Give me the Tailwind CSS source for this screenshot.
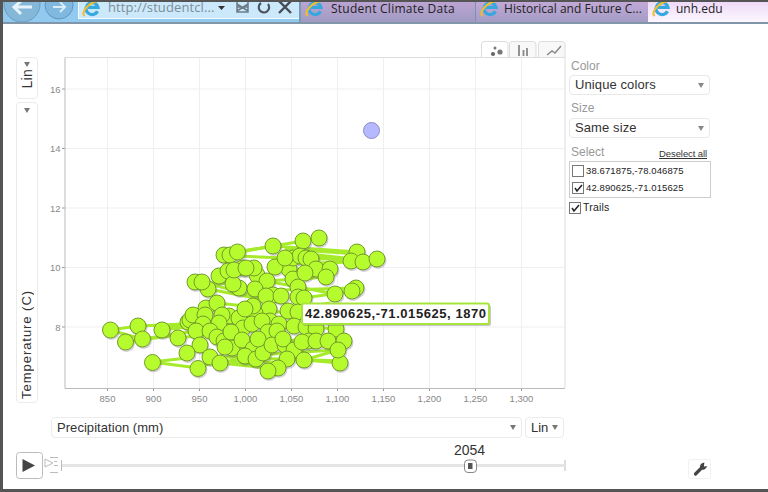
<!DOCTYPE html>
<html lang="en">
<head>
    <meta charset="UTF-8">
    <meta name="viewport" content="width=device-width, initial-scale=1.0">
    <title>Student Climate Data</title>
    <script src="https://cdn.jsdelivr.net/npm/@tailwindcss/browser@4"></script>
</head>
<body class="bg-white overflow-hidden font-['Liberation_Sans',Arial,sans-serif] text-[#333]">
    <svg class="hidden">
        <symbol id="ie" viewBox="0 0 20 18">
            <path d="M15.5 12.2A6 6 0 1 1 16 8.4H6" fill="none" stroke="#35a9df" stroke-width="3.2"/>
            <path d="M2.5 17C-1 14 5 3.500 18 1.500" fill="none" stroke="#f4bd2c" stroke-width="2.200"/>
        </symbol>
    </svg>
    <div class="flex flex-col w-[768px] h-[492px] border-l-[3px] border-t-2 border-b-[3px] border-[#555]">
        <!-- browser bar -->
        <header class="flex h-[22px] shrink-0 overflow-hidden border-b-2 border-[#8196a8] bg-[#91c9ef] font-['Open_Sans','Noto_Sans',sans-serif] text-[12px] font-medium text-[#222]">
            <svg class="w-[75px] h-5 shrink-0" viewBox="3 2 75 20">
                <circle cx="22" cy="4" r="18" fill="#85b7d9" stroke="#6b9cc2"/>
                <circle cx="59" cy="5" r="14" fill="#80b8df" stroke="#5f97c1"/>
                <path d="M32 7H14M21 1l-7 6 7 7" fill="none" stroke="#e6f3fb" stroke-width="3"/>
                <path d="M53 7h12M60 2l5 5-5 5" fill="none" stroke="#d9edf9" stroke-width="2"/>
            </svg>
            <div class="flex w-[221px] h-[17px] shrink-0 border-l border-b border-[#f3fbff] bg-[#cbe9fb]">
                <svg class="w-5 h-[18px] ml-[3px] -mt-[3px]"><use href="#ie"/></svg>
                <span class="w-[104px] ml-[6px] leading-[10px] text-[13px] font-normal tracking-[0.1px] text-[#7d8d98]">http://studentcl...</span>
                <svg class="w-[84px] h-[17px]" viewBox="212 2 84 17">
                    <path d="M218 6h7l-3.500 4z" fill="#333"/>
                    <path d="M237 1h11v11h-11zM237 4l11 7M248 4l-11 7M237 7h11" fill="none" stroke="#6c7c88" stroke-width="1.500"/>
                    <path d="M268 4a5.200 5.200 0 1 1-7 -1" fill="none" stroke="#4c565f" stroke-width="2.200"/>
                    <path d="M279 1l12 12M291 1l-12 12" stroke="#454d55" stroke-width="2.400"/>
                </svg>
            </div>
            <div class="flex w-[176px] shrink-0 border-l-2 border-[#719db7] bg-linear-to-b from-[#bca4d3] to-[#a09bc3]">
                <svg class="w-5 h-[18px] ml-[4px] -mt-[3px]"><use href="#ie"/></svg>
                <span class="ml-[6px] leading-[14px] tracking-[0.25px]">Student Climate Data</span>
            </div>
            <div class="flex w-[173px] shrink-0 border-l border-[#7c92ad] bg-linear-to-b from-[#c2a9d7] to-[#a39cc4]">
                <svg class="w-5 h-[18px] ml-[4px] -mt-[3px] shrink-0"><use href="#ie"/></svg>
                <span class="ml-[4px] leading-[14px] tracking-[0.03px] whitespace-nowrap">Historical and Future C...</span>
            </div>
            <div class="flex grow bg-linear-to-b from-[#eedaf8] to-[#fcf7fe]">
                <svg class="w-5 h-[18px] ml-[4px] -mt-[3px]"><use href="#ie"/></svg>
                <span class="ml-[4px] leading-[14px]">unh.edu</span>
            </div>
        </header>

        <main class="flex h-[384px] shrink-0">
            <!-- y axis selectors -->
            <div class="flex flex-col gap-[3px] w-[22px] ml-[13px] mt-[33px] mr-[5px]">
                <div class="flex flex-col items-center h-[42px] pt-[4px] gap-[2px] border border-[#ebebeb] rounded">
                    <svg class="w-[7px] h-[5px] shrink-0"><path d="M0 0h6L3 5z" fill="#777"/></svg>
                    <span class="[writing-mode:vertical-rl] rotate-180 text-[14px] leading-4 tracking-[0.3px] text-[#333]">Lin</span>
                </div>
                <div class="flex flex-col items-center justify-between h-[301px] pt-[5px] pb-[3px] border border-[#ebebeb] rounded">
                    <svg class="w-[7px] h-[5px]"><path d="M0 0h6L3 5z" fill="#777"/></svg>
                    <span class="[writing-mode:vertical-rl] rotate-180 text-[13px] leading-4 tracking-[0.95px] text-[#333]">Temperature (C)</span>
                </div>
            </div>

            <!-- chart -->
            <div class="w-[524px] shrink-0">
                <div class="flex justify-end h-[16px] mt-[17px] mr-[1px]">
                    <svg class="w-[85px] h-[17px] shrink-0" viewBox="481 41 85 17">
                        <path d="M481.500 58V44q0-2.500 2.500-2.500h21q3 0 3 3V58" fill="#fff" stroke="#ddd"/>
                        <path d="M509.500 57.500V44q0-2.500 2.500-2.500h21q3 0 3 3v13z" fill="#f8f8f8" stroke="#ddd"/>
                        <path d="M538.500 57.500V44q0-2.500 2.500-2.500h21q3 0 3 3v13z" fill="#f8f8f8" stroke="#ddd"/>
                        <circle cx="493" cy="54" r="2.100" fill="#666"/><circle cx="500" cy="52" r="2.600" fill="#777"/><circle cx="495" cy="48" r="1.500" fill="#777"/>
                        <path d="M519 45v11M523.500 50v6M527 48v8" stroke="#888" stroke-width="1.800"/>
                        <path d="M547 55l5-4 3 2 6-7" fill="none" stroke="#888" stroke-width="1.500"/>
                    </svg>
                </div>
                <svg id="chart" class="w-[524px] h-[350px]" viewBox="43 57 524 350"></svg>
            </div>

            <!-- options -->
            <div class="w-[142px] ml-[2px] pt-[35px] text-[13px]">
                <div class="h-[16px] pl-[2px] leading-[15px] text-[12px] text-[#999]">Color</div>
                <div class="flex items-center justify-between h-[20px] pl-[5px] pr-[5px] mr-[1px] border border-[#e8e8e8] rounded">
                    <span class="tracking-[0.1px]">Unique colors</span>
                    <svg class="w-[6px] h-[5px]"><path d="M0 0h6L3 5z" fill="#888"/></svg>
                </div>
                <div class="h-[23px] pt-[6px] pl-[2px] leading-[15px] text-[12px] text-[#999]">Size</div>
                <div class="flex items-center justify-between h-[20px] pl-[5px] pr-[5px] mr-[1px] border border-[#e8e8e8] rounded">
                    <span class="tracking-[0.1px]">Same size</span>
                    <svg class="w-[6px] h-[5px]"><path d="M0 0h6L3 5z" fill="#888"/></svg>
                </div>
                <div class="flex justify-between h-[23px] pt-[7px] pl-[2px] pr-[4px] leading-[15px] text-[12px] text-[#999]">
                    <span>Select</span>
                    <span class="text-[9.500px] leading-[18px] tracking-[-0.1px] text-[#333] underline">Deselect all</span>
                </div>
                <div class="flex flex-col justify-around h-[37px] pl-[2px] border border-[#ccc] text-[9.500px] text-[#222]">
                    <div class="flex items-center h-[16px]">
                        <svg class="w-[12px] h-[12px] mr-[2px]"><rect x=".5" y=".5" width="11" height="11" fill="#fff" stroke="#777"/></svg>
                        <span class="tracking-[0.1px]">38.671875,-78.046875</span>
                    </div>
                    <div class="flex items-center h-[16px]">
                        <svg class="w-[12px] h-[12px] mr-[2px]"><rect x=".5" y=".5" width="11" height="11" fill="#fff" stroke="#777"/><path d="M3 6l2 3 5-6" fill="none" stroke="#222" stroke-width="1.500"/></svg>
                        <span class="tracking-[0.1px]">42.890625,-71.015625</span>
                    </div>
                </div>
                <div class="flex items-center h-[19px] text-[10.500px] text-[#222]">
                    <svg class="w-[12px] h-[12px] mr-[2px]"><rect x=".5" y=".5" width="11" height="11" fill="#fff" stroke="#777"/><path d="M3 6l2 3 5-6" fill="none" stroke="#222" stroke-width="1.500"/></svg>
                    <span class="tracking-[0.2px]">Trails</span>
                </div>
            </div>
        </main>

        <!-- x axis selectors -->
        <div class="flex gap-[3px] h-[21px] shrink-0 ml-[48px] mt-[9px] mb-[2px] text-[13px]">
            <div class="flex items-center justify-between w-[471px] px-[5px] border border-[#ebebeb] rounded">
                <span class="tracking-[0.05px]">Precipitation (mm)</span>
                <svg class="w-[6px] h-[5px]"><path d="M0 0h6L3 5z" fill="#777"/></svg>
            </div>
            <div class="flex items-center justify-between w-[39px] px-[5px] border border-[#ebebeb] rounded">
                <span>Lin</span>
                <svg class="w-[6px] h-[5px]"><path d="M0 0h6L3 5z" fill="#777"/></svg>
            </div>
        </div>

        <!-- time slider -->
        <svg class="w-[765px] h-[49px] shrink-0" viewBox="3 440 765 49" font-family="Liberation Sans">
            <rect x="16.500" y="452.500" width="26" height="26" rx="3" fill="#fff" stroke="#bbb"/>
            <path d="M22.500 459v13l12.500-6.500z" fill="#444"/>
            <path d="M45 459v8l8-4zM50 457.500h8M54 461.500h3M54 465.500h4M50 472.500h8" fill="none" stroke="#bbb"/>
            <path d="M61.500 460v11M565 460v11" stroke="#bbb"/>
            <path d="M62 465.500h503" stroke="#e5e5e5" stroke-width="3"/>
            <text x="469.500" y="455" text-anchor="middle" font-size="14" fill="#333">2054</text>
            <rect x="464.500" y="460" width="12" height="12.500" rx="3.500" fill="#fff" stroke="#888"/>
            <rect x="468" y="463" width="4.500" height="6" fill="#555"/>
            <rect x="688.500" y="459.500" width="22" height="19" rx="2" fill="#fff" stroke="#f1f1f1"/>
            <path d="M695.500 474l6-6" stroke="#444" stroke-width="3.200" stroke-linecap="round"/>
            <path d="M703.500 463.500q-3.500 1-2.500 4.500 3 2.500 5-1l-3 .2z" fill="#444" stroke="#444" stroke-width="1.500"/>
        </svg>
    </div>
    <script>
        // trail segments between years
        const trails = [
            [110,330,138,326],[110,330,142,339],[125,342,178,335],[138,326,206,323],[142,339,196,331],[162,330,205,325],
            [152,362,187,358],[152,362,198,368],[198,368,225,358],[187,353,200,344],[195,282,233,284],[202,282,255,296],
            [208,289,266,300],[217,303,245,306],[224,255,273,246],[237,252,303,241],[237,252,273,246],[237,256,285,258],
            [273,246,357,252],[303,241,319,238],[285,249,357,254],[300,253,363,260],[311,259,377,259],[311,256,351,262],
            [305,257,351,259],[311,263,363,262],
            [288,270,330,269],[293,279,326,277],[266,281,335,294],[281,290,356,288],[304,298,352,291],[267,281,326,277],
            [304,360,340,363],[287,359,340,361],[302,352,338,350],[302,348,344,341],[304,360,338,350],[210,357,268,369],
            [220,363,278,369],[225,357,304,360],[230,360,290,363],[294,326,358,321],[279,324,336,329],[178,338,231,332],[162,328,239,318],
            [288,311,330,303],[253,306,309,319],[255,316,294,326],[258,339,316,341],[245,358,304,350]
        ];
        // one dot per year, later ones on top
        const dots = [
            [125.5,342],[110.5,330],[138,326],[142.5,339],[162,330],[188,322],[190,320],[206,308],[193,315],[205,315],
            [195,282],[208,289],[202,282],[224,255],[230,255],[237.5,252],[219,276],[228,271],[243,268],[239,288],[233,284],[234,270],
            [257,275],[254,268],[246,268],[289,269],[275,267],[273,246],[303,241],[319,238],[293,258],[300,256],[285,258],[306,258],[311,259],
            [357,252],[351,261],[363,262],[377,259],[316,269],[330,269],[326,277],[293,279],[298,287],[305,273],[267,281],[255,289],
            [273,295],[266,296],[281,296],[298,297],[304,298],[335,294],[356,288],[352,291],[269,309],[255,313],[253,306],[217,303],
            [229,316],[222,315],[239,318],[243,328],[252,324],[245,309],[219,323],[203,324],[196,331],[210,331],[200,345],[217,337],[224,341],
            [238,344],[232,348],[231,332],[225,347],[178,338],[187,353],[210,357],[220,363],[198,368.5],[152.5,362.5],
            [270,321],[262,321],[288,311],[298,312],[309,319],[279,324],[294,326],[306,327],[316,329],[336,329],[268,332],[277,331],
            [242,340],[253,349],[245,356],[256,359],[263,353],[258,339],[272,345],[285,345],[283,339],[294,350],[309,341],[302,342],[316,341],[328,341],
            [344,341],[340,363],[338,350],[304,360],[287,359],[278,368],[268,371]
        ];

        let svg = '';
        for (let i = 0; i < 10; i++) {
            const x = 107.5 + i * 46;
            svg += `<path d="M${x} 58V388" stroke="#efefef"/><path d="M${x} 388v3" stroke="#999"/>`;
            svg += `<text x="${x}" y="402" text-anchor="middle">${(850 + i * 50).toLocaleString('en-US')}</text>`;
        }
        for (let i = 0; i < 5; i++) {
            const y = 89 + i * 59.5;
            svg += `<path d="M65 ${y}H565" stroke="#efefef"/><path d="M62 ${y}h3" stroke="#999"/>`;
            svg += `<text x="60.500" y="${y + 3.5}" text-anchor="end">${16 - i * 2}</text>`;
        }
        svg += '<path d="M65 57.500H565V388" fill="none" stroke="#ddd"/><path d="M65 57.500V388.500H565" fill="none" stroke="#bbb"/>';
        for (const [a, b, c, d] of trails) {
            svg += `<path d="M${a} ${b}L${c} ${d}" stroke="#a6eb2a" stroke-width="3"/>`;
        }
        for (const [x, y] of dots) {
            svg += `<circle cx="${x + 1}" cy="${y + 1.5}" r="8.500" fill="#657" fill-opacity=".28"/>`;
        }
        for (const [x, y] of dots) {
            svg += `<circle cx="${x}" cy="${y}" r="8" fill="#b5fb2e" stroke="#739c2b"/>`;
        }
        svg += '<circle cx="371.500" cy="130.500" r="8" fill="#b6b9ff" stroke="#8b8cc4"/>';
        svg += '<rect x="303" y="305" width="188" height="21" rx="2" fill="#657" fill-opacity=".35"/>';
        svg += '<rect x="302" y="303.500" width="187" height="20.500" rx="2" fill="#fff" stroke="#a8e53a" stroke-width="2"/>';
        svg += '<text x="305" y="318" textLength="181" style="font-size:13px;font-weight:bold;fill:#222">42.890625,-71.015625, 1870</text>';
        const chart = document.getElementById('chart');
        chart.innerHTML = svg;
        chart.style.cssText = 'font-size:9.5px;fill:#888';
    </script>
</body>
</html>
